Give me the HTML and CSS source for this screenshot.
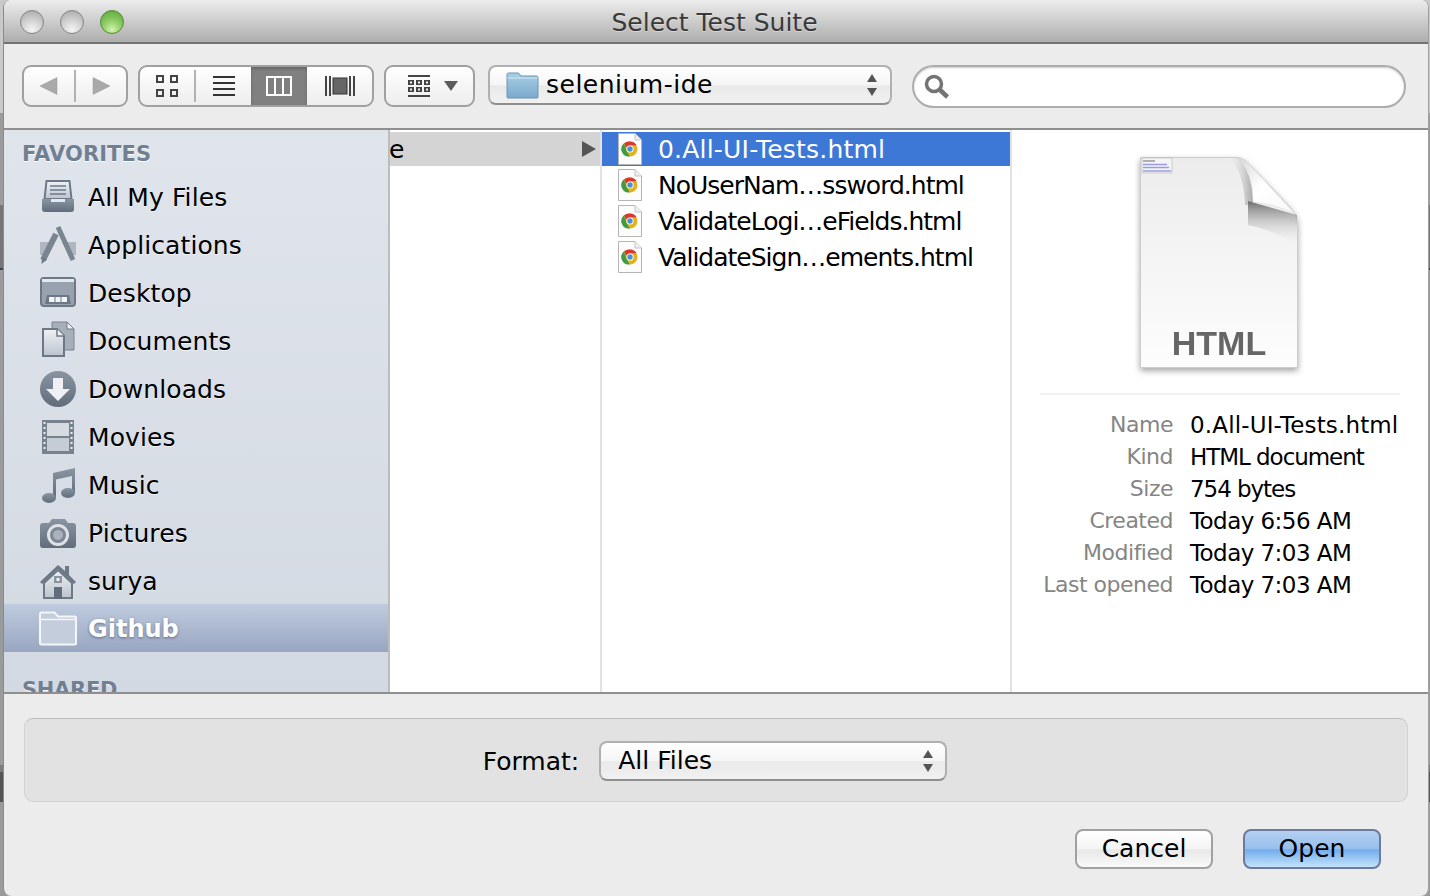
FILE: index.html
```html
<!DOCTYPE html>
<html lang="en">

<head>
    <meta charset="UTF-8">
    <meta name="viewport" content="width=device-width, initial-scale=1.0">
    <title>Select Test Suite</title>
    <link rel="stylesheet" href="styles.css">
</head>

<body>
    <svg class="defs" aria-hidden="true">
        <defs>
            <linearGradient id="iconFill" x1="0" y1="0" x2="0" y2="1">
                <stop offset="0" stop-color="#eef1f4" />
                <stop offset="1" stop-color="#bcc4ce" />
            </linearGradient>
            <linearGradient id="iconDark" x1="0" y1="0" x2="0" y2="1">
                <stop offset="0" stop-color="#8a95a3" />
                <stop offset="1" stop-color="#626d7b" />
            </linearGradient>
            <linearGradient id="folderBlue" x1="0" y1="0" x2="0" y2="1">
                <stop offset="0" stop-color="#a9cfe6" />
                <stop offset="1" stop-color="#7aa9cb" />
            </linearGradient>
            <linearGradient id="pageFill" x1="0" y1="0" x2="0" y2="1">
                <stop offset="0" stop-color="#ececec" />
                <stop offset="1" stop-color="#fdfdfd" />
            </linearGradient>
            <linearGradient id="curlShade" x1="0" y1="0" x2="0" y2="1">
                <stop offset="0" stop-color="#6f6f6f" />
                <stop offset="1" stop-color="#ececec" stop-opacity="0" />
            </linearGradient>
            <linearGradient id="curlSide" x1="0" y1="0" x2="1" y2="0">
                <stop offset="0" stop-color="#ececec" stop-opacity="0" />
                <stop offset="1" stop-color="#a8a8a8" />
            </linearGradient>
            <linearGradient id="curlFill" x1="0" y1="0" x2="1" y2="1">
                <stop offset="0" stop-color="#d6d6d6" />
                <stop offset="0.45" stop-color="#ffffff" />
                <stop offset="1" stop-color="#f8f8f8" />
            </linearGradient>
            <symbol id="htmlFile" viewBox="0 0 24 32">
                <path d="M.5.5H17L23.5 7V31.500H.5z" fill="#fcfcfc" stroke="#b5b5b5" />
                <path d="M17 .5V7h6.500" fill="#efefef" stroke="#c4c4c4" />
                <circle cx="12" cy="16" r="7.500" fill="#e2b21f" />
                <path d="M12 8.500a7.500 7.500 0 0 1 6.500 3.750H12a3.800 3.800 0 0 0-3.600 2.600L6 10.300A7.500 7.500 0 0 1 12 8.500z" fill="#d8392c" />
                <path d="M6 10.300l2.800 8.300 3 4.900A7.500 7.500 0 0 1 6 10.300z" fill="#3f9c3f" />
                <circle cx="12" cy="16" r="3.600" fill="#fff" />
                <circle cx="12" cy="16" r="2.700" fill="#4d8fd6" />
            </symbol>
        </defs>
    </svg>

    <div class="window">
        <header class="titlebar">
            <div class="lights">
                <span class="light"></span>
                <span class="light"></span>
                <span class="light light-green"></span>
            </div>
            <h1>Select Test Suite</h1>
        </header>

        <div class="toolbar">
            <div class="btn-group nav-group">
                <span class="cell cell-nav">
                    <svg width="18" height="18" viewBox="0 0 18 18"><path d="M0 9L17 .5v17z" fill="#a9a9a9" stroke="#999" stroke-width=".5" /></svg>
                </span>
                <span class="sep"></span>
                <span class="cell cell-nav">
                    <svg width="18" height="18" viewBox="0 0 18 18"><path d="M18 9L1 .5v17z" fill="#a9a9a9" stroke="#999" stroke-width=".5" /></svg>
                </span>
            </div>

            <div class="btn-group view-group">
                <span class="cell cell-icons">
                    <svg width="22" height="22" viewBox="0 0 22 22" fill="none" stroke="#444" stroke-width="2"><rect x="1" y="1" width="6" height="6" /><rect x="15" y="1" width="6" height="6" /><rect x="1" y="15" width="6" height="6" /><rect x="15" y="15" width="6" height="6" /></svg>
                </span>
                <span class="sep"></span>
                <span class="cell cell-list">
                    <svg width="22" height="20" viewBox="0 0 22 20" fill="#333"><rect width="22" height="2" /><rect y="6" width="22" height="2" /><rect y="12" width="22" height="2" /><rect y="18" width="22" height="2" /></svg>
                </span>
                <span class="cell cell-active">
                    <svg width="26" height="20" viewBox="0 0 26 20"><rect x="1" y="1" width="24" height="18" fill="#7f7f7f" stroke="#fff" stroke-width="2" /><path d="M9 1v18M17 1v18" stroke="#fff" stroke-width="2" /></svg>
                </span>
                <span class="cell cell-flow">
                    <svg width="30" height="20" viewBox="0 0 30 20"><path d="M1 0v20M5 0v20M25 0v20M29 0v20" stroke="#444" stroke-width="2" /><rect x="8" y="2" width="14" height="16" fill="#666" stroke="#333" /></svg>
                </span>
            </div>

            <div class="btn-group arrange-group">
                <svg width="22" height="22" viewBox="0 0 22 22" fill="#444"><rect width="22" height="2" /><rect y="20" width="22" height="2" /><path d="M0 5h6v5H0zm2 1.500v2h2v-2zM8 5h6v5H8zm2 1.500v2h2v-2zM16 5h6v5h-6zm2 1.500v2h2v-2zM0 12h6v5H0zm2 1.500v2h2v-2zM8 12h6v5H8zm2 1.500v2h2v-2zM16 12h6v5h-6zm2 1.500v2h2v-2z" fill-rule="evenodd" /></svg>
                <svg width="14" height="10" viewBox="0 0 14 10"><path d="M0 0h14L7 10z" fill="#5c5c5c" /></svg>
            </div>

            <div class="popup path-popup">
                <svg width="33" height="27" viewBox="0 0 33 27"><path d="M1 25V2.500A1.500 1.500 0 0 1 2.500 1h10L15 4h15.500A1.500 1.500 0 0 1 32 5.500V25a1 1 0 0 1-1 1H2a1 1 0 0 1-1-1z" fill="url(#folderBlue)" stroke="#6d94b0" /><path d="M1.500 6H31.500" stroke="#d6e8f3" /></svg>
                <span class="popup-text path-text">selenium-ide</span>
                <svg class="stepper" width="10" height="22" viewBox="0 0 10 22" fill="#555"><path d="M5 0l5 8H0zM5 22l5-8H0z" /></svg>
            </div>

            <div class="search">
                <svg width="26" height="26" viewBox="0 0 26 26" fill="none" stroke="#747474"><circle cx="10" cy="10" r="7.500" stroke-width="3.500" /><path d="M15.500 15.500L23.500 23" stroke-width="4.500" /></svg>
            </div>
        </div>

        <div class="browser">
            <aside class="sidebar">
                <div class="side-head">FAVORITES</div>
                <div class="side-item">
                    <svg class="side-icon" viewBox="0 0 40 40"><path d="M8.500 4h23l2 18h-27z" fill="url(#iconFill)" stroke="#6d7886" stroke-width="2" /><path d="M12 9h16M12 13h16M12 17h16" stroke="#6d7886" stroke-width="1.500" /><path d="M4 22h32v10a3 3 0 0 1-3 3H7a3 3 0 0 1-3-3z" fill="url(#iconDark)" /><rect x="13" y="22" width="14" height="3" fill="#e4e8ed" /></svg>
                    <span>All My Files</span>
                </div>
                <div class="side-item">
                    <svg class="side-icon" viewBox="0 0 40 40"><path d="M2 17h36v13H2z" fill="#aeb6c0" /><path d="M8 30L16 17h8l7 13z" fill="#dfe3e8" /><path d="M5 35L18 9" stroke="#7a8592" stroke-width="6" /><path d="M3.500 39l.5-7 5 2.500z" fill="#6d7886" /><path d="M20 2l15 33" stroke="#7a8592" stroke-width="5" /></svg>
                    <span>Applications</span>
                </div>
                <div class="side-item">
                    <svg class="side-icon" viewBox="0 0 40 40"><rect x="3" y="5" width="34" height="28" rx="3" fill="#98a2ae" stroke="#6d7886" stroke-width="2" /><rect x="4" y="6" width="32" height="3" fill="#e4e8ed" /><path d="M7 31l2-9h22l2 9z" fill="#6d7886" /><path d="M11 24h5.500v5H11zM17.500 24h5v5h-5zM23.500 24H29v5h-5.500z" fill="#f2f4f6" /></svg>
                    <span>Desktop</span>
                </div>
                <div class="side-item">
                    <svg class="side-icon" viewBox="0 0 40 40"><path d="M14 1h15l7 7v21H14z" fill="#a5aeb9" stroke="#7a8592" /><path d="M29 1l7 7h-7z" fill="#eef1f4" stroke="#6d7886" /><path d="M5 8h14l7 7v20H5z" fill="url(#iconFill)" stroke="#6d7886" stroke-width="2" /><path d="M19 8v7h7" fill="#f2f4f6" stroke="#6d7886" stroke-width="1.500" /></svg>
                    <span>Documents</span>
                </div>
                <div class="side-item">
                    <svg class="side-icon" viewBox="0 0 40 40"><circle cx="20" cy="20" r="18" fill="url(#iconDark)" /><path d="M15 9h10v11h7L20 32 8 20h7z" fill="#eef0f3" /></svg>
                    <span>Downloads</span>
                </div>
                <div class="side-item">
                    <svg class="side-icon" viewBox="0 0 40 40"><rect x="4" y="3" width="32" height="34" fill="#77828f" /><rect x="9" y="6" width="22" height="13" fill="#d6dbe1" /><rect x="9" y="21" width="22" height="13" fill="#c5ccd4" /><path d="M5.500 5h2v2h-2zM5.500 10h2v2h-2zM5.500 15h2v2h-2zM5.500 20h2v2h-2zM5.500 25h2v2h-2zM5.500 30h2v2h-2zM32.500 5h2v2h-2zM32.500 10h2v2h-2zM32.500 15h2v2h-2zM32.500 20h2v2h-2zM32.500 25h2v2h-2zM32.500 30h2v2h-2z" fill="#e8ebef" /></svg>
                    <span>Movies</span>
                </div>
                <div class="side-item">
                    <svg class="side-icon" viewBox="0 0 40 40"><path d="M15 8l22-5v25h-3V11l-16 3.500V33h-3z" fill="url(#iconDark)" /><ellipse cx="11" cy="33" rx="7" ry="5" fill="url(#iconDark)" /><ellipse cx="30" cy="28" rx="7" ry="5" fill="url(#iconDark)" /></svg>
                    <span>Music</span>
                </div>
                <div class="side-item">
                    <svg class="side-icon" viewBox="0 0 40 40"><path d="M5 10h6l3-4h13l3 4h5a3 3 0 0 1 3 3v19a3 3 0 0 1-3 3H5a3 3 0 0 1-3-3V13a3 3 0 0 1 3-3z" fill="url(#iconDark)" /><circle cx="20" cy="22" r="11" fill="#dfe3e8" /><circle cx="20" cy="22" r="8" fill="#7c8794" /><circle cx="20" cy="22" r="5" fill="#a9b2bd" /></svg>
                    <span>Pictures</span>
                </div>
                <div class="side-item">
                    <svg class="side-icon" viewBox="0 0 40 40"><path d="M2 21L20 4l7 6V5h4v9l7 7-2 2L20 8 4 23z" fill="#6d7886" /><path d="M6 22L20 9l14 13v15H6z" fill="url(#iconFill)" stroke="#6d7886" stroke-width="2" /><rect x="16" y="15" width="8" height="7" fill="#8a95a3" /><rect x="18.500" y="17" width="3" height="3" fill="#eef1f4" /><rect x="16" y="26" width="8" height="12" fill="#626d7b" /></svg>
                    <span>surya</span>
                </div>
                <div class="side-item side-item-selected">
                    <svg class="side-icon" viewBox="0 0 40 40"><path d="M2 34V5a1.500 1.500 0 0 1 1.500-1.500h13L20 7.500h16.500A1.500 1.500 0 0 1 38 9v25a1.500 1.500 0 0 1-1.500 1.500h-33A1.500 1.500 0 0 1 2 34z" fill="#c3cddc" stroke="#f4f6f9" stroke-width="2" /><path d="M3 10.500h34" stroke="#f4f6f9" stroke-width="1.500" /></svg>
                    <span>Github</span>
                </div>
                <div class="side-head side-head-shared">SHARED</div>
            </aside>

            <section class="column column-parent">
                <div class="file-row parent-row">
                    <span class="parent-name">e</span>
                    <svg width="14" height="16" viewBox="0 0 14 16"><path d="M0 0l14 8-14 8z" fill="#555" /></svg>
                </div>
            </section>

            <section class="column column-files">
                <div class="file-row file-row-selected">
                    <svg class="file-icon"><use href="#htmlFile" /></svg>
                    <span>0.All-UI-Tests.html</span>
                </div>
                <div class="file-row">
                    <svg class="file-icon"><use href="#htmlFile" /></svg>
                    <span>NoUserNam…ssword.html</span>
                </div>
                <div class="file-row">
                    <svg class="file-icon"><use href="#htmlFile" /></svg>
                    <span>ValidateLogi…eFields.html</span>
                </div>
                <div class="file-row">
                    <svg class="file-icon"><use href="#htmlFile" /></svg>
                    <span>ValidateSign…ements.html</span>
                </div>
            </section>

            <section class="preview">
                <svg class="doc-icon" width="158" height="216" viewBox="0 0 158 216">
                    <path d="M.5.5H97Q104 1 110 8L150 50Q157.500 58 157.500 68V210.500H.5z" fill="url(#pageFill)" stroke="#cdcdcd" />
                    <path d="M88 1Q104 14 105 48H113Q113 14 97 1z" fill="url(#curlSide)" />
                    <path d="M108 44L157 58V88Q135 74 108 68z" fill="url(#curlShade)" />
                    <path d="M97 1Q104 1 110 8L155 57Q135 47 113 45Q113 14 97 1z" fill="url(#curlFill)" stroke="#d4d4d4" stroke-width=".5" />
                    <rect x="2" y="1" width="30" height="15" fill="#f4f4f4" stroke="#a8a8a8" stroke-width=".5" />
                    <path d="M3 4h12" stroke="#999" stroke-width="1.500" />
                    <path d="M3 7.500h24M3 10.500h26M3 14h28" stroke="#9a9ae8" stroke-width="1.500" />
                    <text x="79" y="198" text-anchor="middle" class="doc-label">HTML</text>
                </svg>
                <div class="preview-rule"></div>
                <dl class="meta">
                    <dt>Name</dt><dd class="meta-name">0.All-UI-Tests.html</dd>
                    <dt>Kind</dt><dd class="meta-tight">HTML document</dd>
                    <dt>Size</dt><dd class="meta-tight">754 bytes</dd>
                    <dt>Created</dt><dd>Today 6:56 AM</dd>
                    <dt>Modified</dt><dd>Today 7:03 AM</dd>
                    <dt>Last opened</dt><dd>Today 7:03 AM</dd>
                </dl>
            </section>
        </div>

        <footer class="bottom">
            <div class="accessory">
                <label class="format-label">Format:</label>
                <div class="popup format-popup">
                    <span class="popup-text">All Files</span>
                    <svg class="stepper" width="10" height="22" viewBox="0 0 10 22" fill="#555"><path d="M5 0l5 8H0zM5 22l5-8H0z" /></svg>
                </div>
            </div>
            <div class="actions">
                <button type="button" class="action">Cancel</button>
                <button type="button" class="action action-default">Open</button>
            </div>
        </footer>
    </div>
</body>

</html>
```

FILE: styles.css
```css
:root {
    --ui-font: "DejaVu Sans", sans-serif;
    --chrome: #ececec;
    --line: #8f8f8f;
    --btn-border: #a0a0a0;
    --select-blue: #3d78d6;
}

html,
body {
    height: 100%;
}

body {
    margin: 0;
    padding: 0 1px 0 3px;
    box-sizing: border-box;
    overflow: hidden;
    font-family: var(--ui-font);
    color: #000;
    background: linear-gradient(to bottom,
            #c9c9c9 0, #c9c9c9 113px,
            #9b9b9b 113px, #9b9b9b 205px,
            #767676 205px, #767676 268px,
            #444 268px, #444 270px,
            #9b9b9b 270px, #9b9b9b 765px,
            #7d7d7d 765px, #7d7d7d 772px,
            #555 772px, #555 802px,
            #9b9b9b 802px);
}

.defs {
    position: absolute;
    width: 0;
    height: 0;
}

.window {
    height: 896px;
    display: flex;
    flex-direction: column;
    background-color: var(--chrome);
    border-left: 1px solid #8a8a8a;
    border-right: 1px solid #a0a0a0;
    border-radius: 8px;
    overflow: hidden;
}

/* title bar */

.titlebar {
    flex: 0 0 auto;
    height: 42px;
    display: flex;
    align-items: center;
    justify-content: center;
    background: linear-gradient(to bottom, #ececec, #adadad);
    border-bottom: 2px solid #737373;
    position: relative;
}

.titlebar h1 {
    margin: 0;
    padding: 2px 3px 0 0;
    font-size: 25px;
    font-weight: normal;
    color: #3a3a3a;
    text-shadow: 0 1px 0 rgba(255, 255, 255, 0.4);
}

.lights {
    position: absolute;
    left: 16px;
    top: 10px;
    display: flex;
    gap: 16px;
}

.light {
    width: 24px;
    height: 24px;
    box-sizing: border-box;
    border-radius: 50%;
    border: 1px solid #858585;
    background: radial-gradient(circle at 50% 85%, #f4f4f4 0, #d2d2d2 45%, #a5a5a5 100%);
}

.light-green {
    border-color: #4f8a30;
    background: radial-gradient(circle at 50% 85%, #d3f3b0 0, #8ccb62 45%, #58a43a 100%);
}

/* toolbar */

.toolbar {
    flex: 0 0 auto;
    height: 63px;
    padding: 21px 0 0 18px;
    display: flex;
    align-items: flex-start;
    background-color: var(--chrome);
    border-bottom: 2px solid var(--line);
}

.btn-group {
    height: 42px;
    box-sizing: border-box;
    display: flex;
    align-items: stretch;
    border: 2px solid var(--btn-border);
    border-radius: 9px;
    background: linear-gradient(to bottom, #fff, #ededed);
    overflow: hidden;
}

.nav-group {
    width: 106px;
}

.view-group {
    width: 236px;
    margin-left: 10px;
}

.arrange-group {
    width: 91px;
    margin-left: 10px;
    align-items: center;
    gap: 14px;
    padding-left: 22px;
}

.cell {
    display: flex;
    align-items: center;
    justify-content: center;
}

.cell-nav {
    flex: 1;
}

.cell-icons {
    width: 54px;
}

.cell-list {
    width: 55px;
}

.cell-active {
    width: 56px;
    background-color: #808080;
    box-shadow: inset 0 2px 3px #666;
}

.cell-flow {
    flex: 1;
}

.sep {
    width: 2px;
    height: 32px;
    align-self: center;
    background-color: #b2b2b2;
}

.popup {
    box-sizing: border-box;
    display: flex;
    align-items: center;
    height: 40px;
    border: 2px solid #b0b0b0;
    border-bottom-color: #8e8e8e;
    border-radius: 8px;
    background: linear-gradient(to bottom, #fff 0, #f5f5f5 50%, #e9e9e9 52%, #f1f1f1 100%);
}

.popup-text {
    font-size: 25px;
    line-height: 34px;
    flex: 1;
}

.stepper {
    flex: 0 0 auto;
}

.path-popup {
    width: 404px;
    margin-left: 13px;
    padding: 0 13px 0 16px;
    gap: 7px;
}

.path-text {
    letter-spacing: 0.5px;
}

.search {
    width: 494px;
    height: 43px;
    box-sizing: border-box;
    margin-left: 20px;
    padding: 7px 0 0 10px;
    background-color: #fff;
    border: 2px solid #adadad;
    border-radius: 22px;
    box-shadow: inset 0 1px 2px #ccc;
}

/* main browser */

.browser {
    flex: 0 0 auto;
    height: 562px;
    display: flex;
    background-color: #fff;
    border-bottom: 2px solid var(--line);
}

.sidebar {
    width: 384px;
    flex: 0 0 auto;
    overflow: hidden;
    border-right: 2px solid #bcbcbc;
    background: linear-gradient(to bottom, #e0e5ec, #d3d9e2);
}

.side-head {
    height: 43px;
    box-sizing: border-box;
    padding: 11px 0 0 18px;
    font-size: 21px;
    line-height: 26px;
    font-weight: bold;
    color: #707f92;
    text-shadow: 0 1px 0 #fff;
    letter-spacing: 0.1px;
}

.side-head-shared {
    margin-top: 14px;
    letter-spacing: -0.3px;
}

.side-item {
    height: 48px;
    box-sizing: border-box;
    padding-left: 34px;
    display: flex;
    align-items: center;
    gap: 10px;
    font-size: 25px;
    letter-spacing: 0.1px;
    text-shadow: 0 1px 0 rgba(255, 255, 255, 0.6);
}

.side-icon {
    width: 40px;
    height: 40px;
    flex: 0 0 auto;
}

.side-item-selected {
    margin-top: -1px;
    padding-top: 1px;
    color: #fff;
    font-size: 24px;
    font-weight: bold;
    letter-spacing: 0;
    text-shadow: 0 1px 3px #5d6c88;
    background: linear-gradient(to bottom, #bfcbde, #98a6c1);
}

.column {
    flex: 0 0 auto;
    box-sizing: border-box;
    padding-top: 2px;
    border-right: 2px solid #e2e2e2;
    display: flex;
    flex-direction: column;
    gap: 2px;
}

.column-parent {
    width: 212px;
}

.column-files {
    width: 410px;
}

.file-row {
    height: 34px;
    display: flex;
    align-items: center;
    font-size: 25px;
    letter-spacing: -1px;
    white-space: nowrap;
    overflow: hidden;
    padding-left: 16px;
    gap: 16px;
}

.parent-row {
    background-color: #d4d4d4;
    padding: 0 4px 0 0;
    justify-content: space-between;
}

.parent-name {
    margin-left: -1px;
}

.file-row-selected {
    background-color: var(--select-blue);
    color: #fff;
    letter-spacing: 0.2px;
}

.file-icon {
    width: 24px;
    height: 32px;
    flex: 0 0 auto;
}

.preview {
    flex: 1;
    min-width: 0;
    padding-top: 27px;
    display: flex;
    flex-direction: column;
    align-items: center;
}

.doc-icon {
    margin-right: 2px;
    filter: drop-shadow(0 3px 3px rgba(0, 0, 0, 0.35));
}

.doc-label {
    font-family: "Liberation Sans", sans-serif;
    font-size: 34px;
    font-weight: bold;
    fill: #666;
}

.preview-rule {
    width: 360px;
    height: 2px;
    margin-top: 20px;
    background-color: #f1f1f1;
}

.meta {
    margin: 15px 0 0;
    align-self: flex-start;
    display: grid;
    grid-template-columns: 161px auto;
    column-gap: 17px;
    grid-auto-rows: 32px;
    font-size: 23px;
    line-height: 30px;
    white-space: nowrap;
}

.meta dt {
    text-align: right;
    font-size: 22px;
    letter-spacing: -0.5px;
    color: #858585;
}

.meta dd {
    margin: 0;
    letter-spacing: -0.55px;
}

.meta .meta-name {
    letter-spacing: 0.15px;
}

.meta .meta-tight {
    letter-spacing: -1.05px;
}

/* bottom panel */

.bottom {
    flex: 1;
    padding: 24px 20px 0;
}

.accessory {
    height: 84px;
    box-sizing: border-box;
    padding: 2px 2px 0 0;
    display: flex;
    align-items: center;
    justify-content: center;
    gap: 20px;
    background-color: #e2e2e2;
    border: 1px solid #d2d2d2;
    border-top-color: #bdbdbd;
    border-radius: 9px;
}

.format-label {
    font-size: 25px;
}

.format-popup {
    width: 348px;
    padding: 0 12px 0 17px;
}

.actions {
    margin-top: 27px;
    padding-right: 27px;
    display: flex;
    justify-content: flex-end;
    gap: 30px;
}

.action {
    width: 138px;
    height: 40px;
    padding: 0;
    font-family: var(--ui-font);
    font-size: 25px;
    line-height: 36px;
    color: #000;
    border: 2px solid #a0a0a0;
    border-radius: 8px;
    background: linear-gradient(to bottom, #fff 0, #f4f4f4 50%, #e8e8e8 52%, #f9f9f9 100%);
}

.action-default {
    border-color: #6c7a9c;
    background: linear-gradient(to bottom, #b4d0f1 0, #97bfec 50%, #72aced 52%, #c3e2fa 100%);
}
```
